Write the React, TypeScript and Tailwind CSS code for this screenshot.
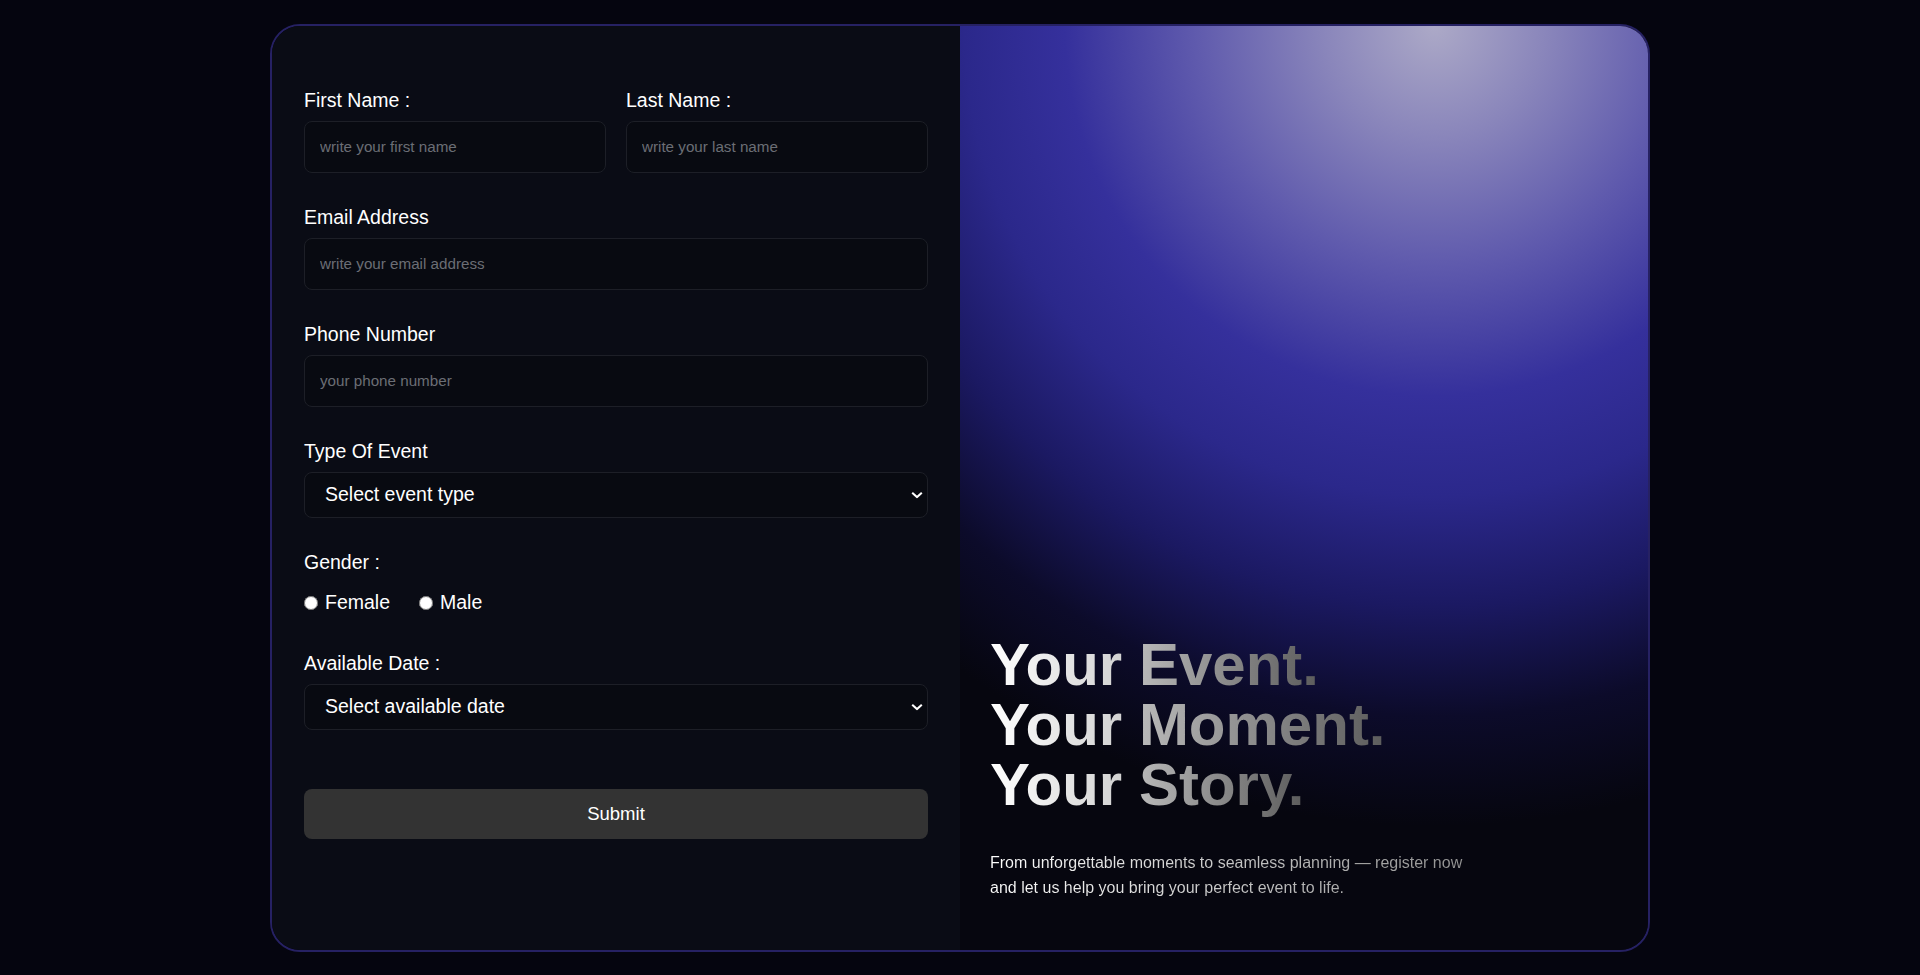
import { useState } from "react";

const labelCls = "mb-2.5 block text-[19.5px] leading-[21.5px] text-white";
const inputCls =
  "h-[51.5px] w-full rounded-lg border border-[#1d1f27] bg-[#080a11] px-[15px] text-[15.2px] text-white outline-none placeholder:text-[#6b6e75]";

function Field({ label, placeholder, type = "text" }: { label: string; placeholder: string; type?: string }) {
  return (
    <div>
      <label className={labelCls}>{label}</label>
      <input type={type} placeholder={placeholder} className={inputCls} />
    </div>
  );
}

function SelectField({ label, placeholder, options, className = "" }: { label: string; placeholder: string; options: string[]; className?: string }) {
  return (
    <div className={className}>
      <label className={labelCls}>{label}</label>
      <div className="relative">
        <select
          defaultValue=""
          className="h-[45.5px] w-full appearance-none rounded-lg border border-[#1d1f27] bg-[#080a11] pl-5 pr-8 text-[19.5px] text-white outline-none"
        >
          <option value="" disabled>
            {placeholder}
          </option>
          {options.map((o) => (
            <option key={o} value={o}>
              {o}
            </option>
          ))}
        </select>
        {/* chevron drawn over the native select */}
        <svg
          aria-hidden
          viewBox="0 0 12 7"
          className="pointer-events-none absolute right-[5px] top-1/2 h-[7px] w-[12px] -translate-y-1/2"
        >
          <path d="M1.2 1.2 6 5.6 10.8 1.2" fill="none" stroke="white" strokeWidth="2" />
        </svg>
      </div>
    </div>
  );
}

const taglines = ["Event.", "Moment.", "Story."];

export default function App() {
  const [gender, setGender] = useState("");

  return (
    <div className="flex min-h-screen items-center justify-center bg-[#05050f] font-['Liberation_Sans',Arial,sans-serif]">
      <div className="grid h-[928px] w-[1380px] grid-cols-2 overflow-hidden rounded-[30px] border-2 border-[#262163]">
        {/* form side */}
        <form className="flex flex-col gap-[34px] bg-[#0a0c15] px-8 pt-16" onSubmit={(e) => e.preventDefault()}>
          <div className="grid grid-cols-2 gap-5">
            <Field label="First Name :" placeholder="write your first name" />
            <Field label="Last Name :" placeholder="write your last name" />
          </div>
          <Field label="Email Address" placeholder="write your email address" type="email" />
          <Field label="Phone Number" placeholder="your phone number" type="tel" />
          <SelectField
            label="Type Of Event"
            placeholder="Select event type"
            options={["Wedding", "Birthday", "Conference", "Concert"]}
          />

          <div>
            <p className="mb-[19px] text-[19.5px] leading-[21.5px] text-white">Gender :</p>
            <div className="flex items-center gap-[29px] text-[19.5px] leading-[21.5px] text-white">
              {["Female", "Male"].map((g) => (
                <label key={g} className="flex items-center gap-[7px]">
                  <input
                    type="radio"
                    name="gender"
                    value={g}
                    checked={gender === g}
                    onChange={() => setGender(g)}
                    className="h-[14px] w-[14px]"
                  />
                  {g}
                </label>
              ))}
            </div>
          </div>

          <SelectField
            className="mt-[5px]"
            label="Available Date :"
            placeholder="Select available date"
            options={["June 12", "June 19", "June 26"]}
          />

          <button
            type="submit"
            className="mt-[25px] h-[50px] w-full rounded-lg bg-[#333333] text-[18.5px] text-white"
          >
            Submit
          </button>
        </form>

        {/* visual side */}
        <div className="flex flex-col justify-end bg-[radial-gradient(circle_at_69%_0%,#aca9c7_0px,#8a86bb_110px,#5f5aad_240px,#35309c_370px,#2b288b_470px,#1b1962_580px,#0c0b2a_690px,#06060f_800px)] pb-[50px] pl-[30px]">
          <h1 className="text-[60px] font-bold leading-[60px]">
            {taglines.map((t) => (
              <span key={t} className="block">
                <span className="bg-linear-to-r from-white to-[#d2d2d2] bg-clip-text text-transparent">Your</span>{" "}
                <span className="bg-linear-to-r from-[#b9b9b9] to-[#5c5c5c] bg-clip-text text-transparent">{t}</span>
              </span>
            ))}
          </h1>
          <p className="mt-[35px] max-w-[500px] bg-linear-to-r from-white to-[#8c8c8c] bg-clip-text text-[16px] leading-[25px] text-transparent">
            From unforgettable moments to seamless planning — register now and let us help you bring your perfect
            event to life.
          </p>
        </div>
      </div>
    </div>
  );
}
